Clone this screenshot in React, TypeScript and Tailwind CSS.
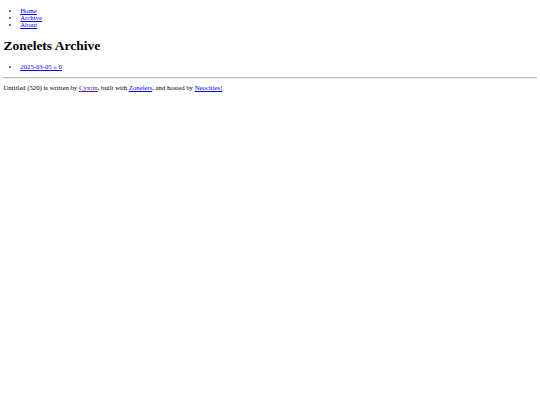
import React from "react";

export default function App() {
  const link = "text-[#0000ee] underline";
  return (
    <div className="bg-white min-h-[405px] w-[540px] overflow-hidden">
      <div className="[zoom:0.421875] w-[1280px] flow-root px-2 text-black text-[16px]" style={{ fontFamily: '"Liberation Serif", "Times New Roman", serif', lineHeight: "normal" }}>
        <ul className="list-disc pl-10 my-4 marker:text-[#444]">
          <li><a href="#" className={link}>Home</a></li>
          <li><a href="#" className={link}>Archive</a></li>
          <li><a href="#" className={link}>About</a></li>
        </ul>
        <h1 className="text-[32px] font-bold mt-[24px] mb-[22px]" style={{ lineHeight: "normal" }}>Zonelets Archive</h1>
        <ul className="list-disc pl-10 mt-4 mb-0 marker:text-[#444]">
          <li><a href="#" className={link}>2025-03-05 » 0</a></li>
        </ul>
        <hr className="mt-[16px] mb-0 h-0 border-t border-b border-t-[#bdbdbd] border-b-[#eeeeee]" />
        <p className="mt-[12px] mb-4">
          Untitled (520) is written by <a href="#" className="text-[#551a8b] underline">Cyxrin</a>, built with{" "}
          <a href="#" className={link}>Zonelets</a>, and hosted by <a href="#" className={link}>Neocities!</a>
        </p>
      </div>
    </div>
  );
}
